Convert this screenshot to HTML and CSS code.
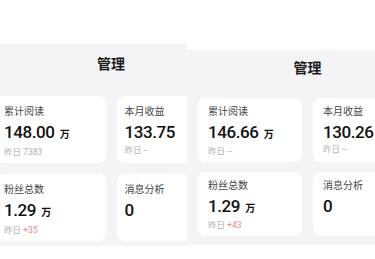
FILE: index.html
```html
<!DOCTYPE html>
<html lang="zh-CN">
<head>
    <meta charset="UTF-8">
    <meta name="viewport" content="width=device-width, initial-scale=1.0">
    <title>管理</title>
    <link rel="stylesheet" href="styles.css">
</head>
<body>
    <div class="stage">
        <!-- 左侧截图 -->
        <div class="shot shot-left">
            <div class="panel">
                <h1 class="title">管理</h1>
                <div class="grid">
                    <div class="card">
                        <div class="label">累计阅读</div>
                        <div class="value">148.00<span class="unit">万</span></div>
                        <div class="sub">昨日 7383</div>
                    </div>
                    <div class="card">
                        <div class="label">本月收益</div>
                        <div class="value">133.75</div>
                        <div class="sub">昨日 --</div>
                    </div>
                    <div class="card">
                        <div class="label">粉丝总数</div>
                        <div class="value">1.29<span class="unit">万</span></div>
                        <div class="sub">昨日 <span class="up">+35</span></div>
                    </div>
                    <div class="card">
                        <div class="label">消息分析</div>
                        <div class="value">0</div>
                    </div>
                </div>
            </div>
        </div>

        <!-- 右侧截图 -->
        <div class="shot shot-right">
            <div class="panel">
                <h1 class="title">管理</h1>
                <div class="grid">
                    <div class="card">
                        <div class="label">累计阅读</div>
                        <div class="value">146.66<span class="unit">万</span></div>
                        <div class="sub">昨日 --</div>
                    </div>
                    <div class="card">
                        <div class="label">本月收益</div>
                        <div class="value">130.26</div>
                        <div class="sub">昨日 --</div>
                    </div>
                    <div class="card">
                        <div class="label">粉丝总数</div>
                        <div class="value">1.29<span class="unit">万</span></div>
                        <div class="sub">昨日 <span class="up">+43</span></div>
                    </div>
                    <div class="card">
                        <div class="label">消息分析</div>
                        <div class="value">0</div>
                    </div>
                </div>
            </div>
        </div>
    </div>
</body>
</html>
```

FILE: styles.css
```css
* {
    margin: 0;
    padding: 0;
    box-sizing: border-box;
    font-family: Roboto, 'Noto Sans CJK SC', sans-serif;
}

body {
    width: 375px;
    height: 259px;
    overflow: hidden;
    background-color: #fff;
    color: #222;
}

.stage {
    display: flex;
    height: 259px;
}

.shot {
    overflow: hidden;
    height: 259px;
}

.panel {
    background: #f4f4f6;
}

.title {
    text-align: center;
    font-size: 14px;
    font-weight: 700;
    color: #1a1a1a;
    font-family: 'Noto Sans CJK SC', sans-serif;
}

.grid {
    display: grid;
    grid-template-columns: 1fr 1fr;
}

.card {
    background: #fff;
    border-radius: 8px;
}

.label {
    font-family: 'Noto Sans CJK SC', sans-serif;
    font-size: 10px;
    line-height: 14px;
    color: #444;
}

.value {
    font-size: 17px;
    font-weight: 500;
    letter-spacing: -0.4px;
    line-height: 22px;
    color: #111;
}

.unit {
    font-family: 'Noto Sans CJK SC', sans-serif;
    font-size: 10px;
    font-weight: 700;
    letter-spacing: 0;
    margin-left: 5px;
}

.sub {
    font-size: 8.5px;
    line-height: 12px;
    color: #b0b0b0;
}

.sub .up {
    color: #e98a8a;
}

/* 左侧截图（略大，左边被裁掉） */
.shot-left {
    width: 187px;
    flex: none;
}

.shot-left .panel {
    width: 252px;
    margin: 44px 0 0 -15px;
    padding: 0 11px 5px;
}

.shot-left .title {
    line-height: 38px;
    margin-bottom: 14px;
}

.shot-left .grid {
    gap: 11px;
}

.shot-left .card {
    height: 67px;
    padding: 8px 0 0 8px;
}

.shot-left .value {
    margin-top: 3px;
}

.shot-left .sub {
    margin-top: 1px;
}

/* 右侧截图 */
.shot-right {
    flex: 1;
}

.shot-right .panel {
    width: 241px;
    margin-top: 50px;
    padding: 0 11px 9px;
}

.shot-right .title {
    line-height: 34px;
    margin-bottom: 14px;
}

.shot-right .grid {
    gap: 10px 11px;
}

.shot-right .card {
    height: 64px;
    padding: 6px 0 0 10px;
}

.shot-right .value {
    margin-top: 3px;
}

.shot-right .sub {
    margin-top: 0;
}
```
